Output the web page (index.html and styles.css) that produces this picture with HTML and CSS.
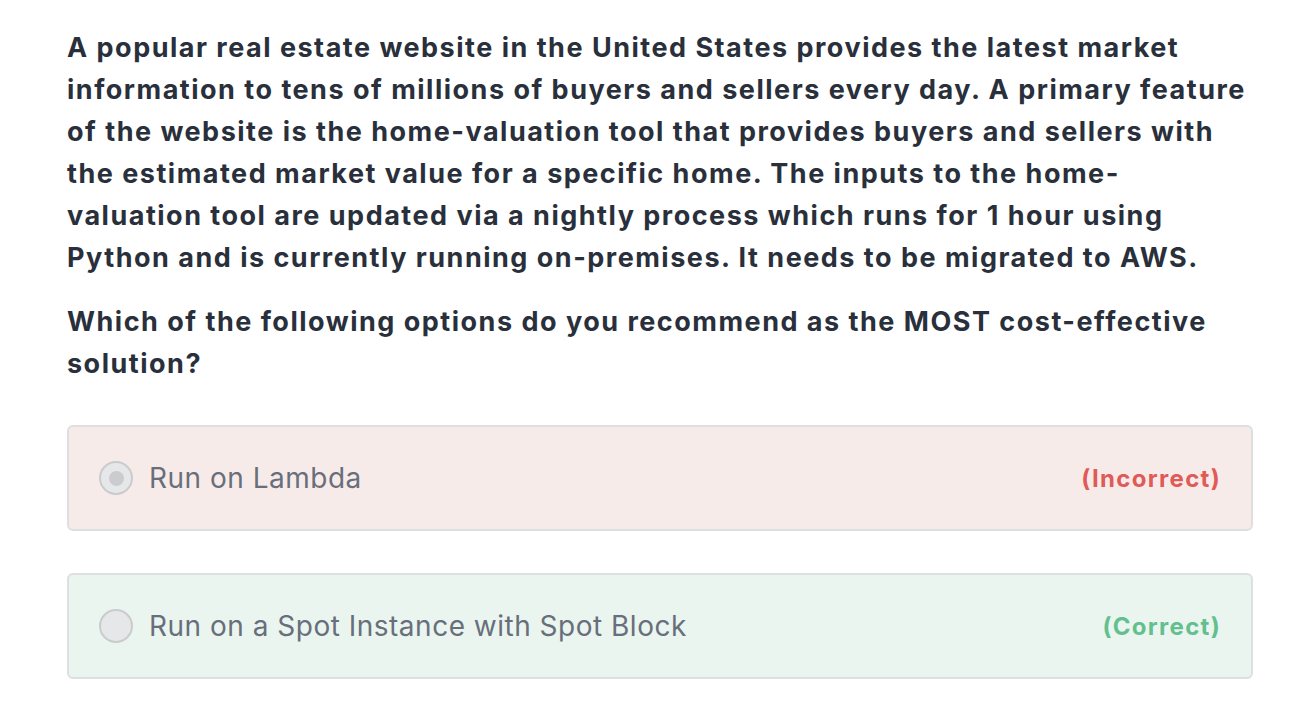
FILE: index.html
```html
<!DOCTYPE html>
<html lang="en">
<head>
<meta charset="utf-8">
<link rel="stylesheet" href="styles.css">
</head>
<body>
<main class="question">
  <p class="prompt">A popular real estate website in the United States provides the latest market<br>information to tens of millions of buyers and sellers every day. A primary feature<br>of the website is the home-valuation tool that provides buyers and sellers with<br>the estimated market value for a specific home. The inputs to the home-<br>valuation tool are updated via a nightly process which runs for 1 hour using<br>Python and is currently running on-premises. It needs to be migrated to AWS.</p>
  <p class="prompt">Which of the following options do you recommend as the MOST cost-effective<br>solution?</p>
  <div class="options">
    <div class="option option-incorrect">
      <span class="radio radio-checked"></span>
      <span class="option-label">Run on Lambda</span>
      <span class="verdict verdict-incorrect">(Incorrect)</span>
    </div>
    <div class="option option-correct">
      <span class="radio"></span>
      <span class="option-label">Run on a Spot Instance with Spot Block</span>
      <span class="verdict verdict-correct">(Correct)</span>
    </div>
  </div>
</main>
</body>
</html>
```
FILE: styles.css
```css
html, body {
  margin: 0;
  padding: 0;
  background: #ffffff;
}
body {
  font-family: Inter, "Noto Sans", "Liberation Sans", sans-serif;
  color: #29303b;
}
.question {
  padding: 27px 59px 0 67px;
}
.prompt {
  margin: 0 -20px 22px 0;
  font-size: 27px;
  line-height: 42px;
  font-weight: 700;
  letter-spacing: 1.5px;
}
.options {
  display: flex;
  flex-direction: column;
  gap: 42px;
  margin-top: 40px;
}
.option {
  display: flex;
  align-items: center;
  height: 106px;
  box-sizing: border-box;
  border: 2px solid #dedfe0;
  border-radius: 6px;
  padding: 0 30px 0 30px;
}
.option-incorrect { background: #f7ebea; }
.option-correct { background: #ebf5f0; }
.radio {
  width: 34px;
  height: 34px;
  box-sizing: border-box;
  border-radius: 50%;
  border: 2px solid #cacbcc;
  background: #e6e7e9;
  display: flex;
  align-items: center;
  justify-content: center;
  flex: none;
}
.radio-checked::after {
  content: "";
  width: 15px;
  height: 15px;
  border-radius: 50%;
  background: #cbcccf;
}
.option-label {
  margin-left: 16px;
  font-size: 28px;
  letter-spacing: 0.5px;
  color: #686f7a;
  flex: 1;
}
.verdict {
  font-size: 24px;
  font-weight: 700;
  letter-spacing: 1.3px;
}
.verdict-incorrect { color: #e05b57; }
.verdict-correct { color: #63c08e; }
```
